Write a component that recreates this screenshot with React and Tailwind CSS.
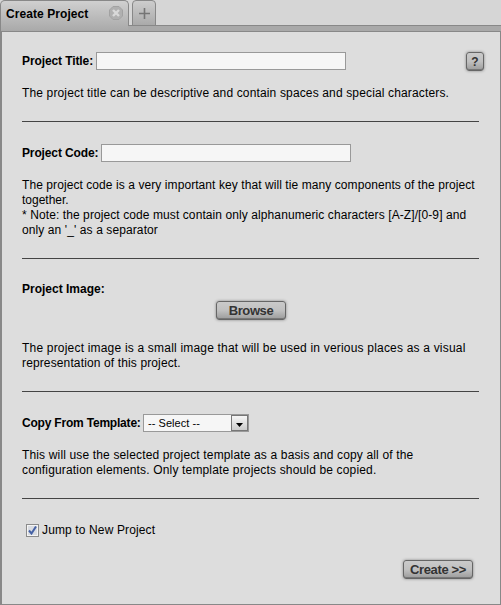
import React from 'react';

function Line({ children, className = '' }) {
  return <div className={`h-[15px] whitespace-nowrap leading-[15px] ${className}`}>{children}</div>;
}

function Label({ children, className = '' }) {
  return <span className={`shrink-0 whitespace-nowrap font-bold leading-[18px] ${className}`}>{children}</span>;
}

function Field() {
  return <input className="block h-[18px] w-[250px] border border-[#999] bg-[#f6f6f6] px-1 outline-none" />;
}

function GlossButton({ children, className = '' }) {
  return (
    <button
      className={`flex items-center justify-center whitespace-nowrap rounded-[3px] border border-[#666] bg-linear-to-b from-[#cacaca] via-[#c0c0c0] to-[#9c9c9c] font-bold text-[#333] shadow-[0_0_3px_rgba(0,0,0,0.4),inset_0_-1px_0_#777] ${className}`}
    >
      {children}
    </button>
  );
}

function Tabs() {
  return (
    <div className="relative flex h-8 border-b border-[#888] bg-[#d6d6d6]">
      <div className="flex h-[31px] w-[129px] rounded-t-[5px] border-x border-t border-[#888] bg-linear-to-b from-[#d0d0d0] to-[#a9a9a9] pl-[5px] pt-[5px]">
        <span className="mt-px w-[103px] whitespace-nowrap text-[12px] font-bold leading-[15px] tracking-[0.07px]">
          Create Project
        </span>
        <svg width="14" height="14" viewBox="0 0 14 14">
          <path d="M4 .5h6L13.500 4v6L10 13.500H4L.5 10V4Z" fill="#b0b0b0" stroke="#a2a2a2" />
          <path d="m4 4 6 6m0-6-6 6" stroke="#d9d9d9" strokeWidth="2.400" />
        </svg>
      </div>
      <div className="ml-[3px] flex h-[26px] w-6 justify-end rounded-t-[4px] border border-[#888] bg-linear-to-b from-[#cdcdcd] to-[#aaa] pr-[5px] pt-[7px]">
        <svg width="11" height="11" viewBox="0 0 11 11">
          <path d="M5.500 0v11M0 5.500h11" stroke="#757575" strokeWidth="1.600" />
        </svg>
      </div>
      <div className="absolute left-[128px] right-0 top-[25px] h-[6px] border-t border-[#888] bg-[#a9a9a9]" />
    </div>
  );
}

export default function App() {
  return (
    <div className="flex h-[605px] w-[501px] flex-col overflow-hidden bg-[#ddd] font-['Liberation_Sans',Arial,sans-serif] text-[12px] text-black">
      <Tabs />
      <main className="flex-1 border-b border-l-2 border-r border-[#888] pl-5">
        <section className="h-[90px] w-[457px] border-b border-[#444] pt-5">
          <div className="flex w-[462px]">
            <Label className="w-[74px] tracking-[-0.1px]">Project Title:</Label>
            <Field />
            <GlossButton className="ml-auto h-[19px] w-[18px] text-[12px]">?</GlossButton>
          </div>
          <Line className="mt-[15px] tracking-[0.145px]">
            The project title can be descriptive and contain spaces and special characters.
          </Line>
        </section>

        <section className="h-[137px] w-[457px] border-b border-[#444] pt-[22px]">
          <div className="flex">
            <Label className="w-[79px] tracking-[-0.13px]">Project Code:</Label>
            <Field />
          </div>
          <div className="mt-4">
            <Line className="tracking-[0.077px]">
              The project code is a very important key that will tie many components of the project
            </Line>
            <Line>together.</Line>
            <Line className="tracking-[0.09px]">
              * Note: the project code must contain only alphanumeric characters [A-Z]/[0-9] and
            </Line>
            <Line className="tracking-[0.1px]">only an '_' as a separator</Line>
          </div>
        </section>

        <section className="h-[133px] w-[457px] border-b border-[#444] pt-[21px]">
          <Label className="block">Project Image:</Label>
          <GlossButton className="ml-[194px] mt-[3px] h-[19px] w-[70px] text-[13px] tracking-[-0.4px]">
            Browse
          </GlossButton>
          <div className="mt-[21px]">
            <Line className="tracking-[0.195px]">
              The project image is a small image that will be used in verious places as a visual
            </Line>
            <Line className="tracking-[0.13px]">representation of this project.</Line>
          </div>
        </section>

        <section className="h-[107px] w-[457px] border-b border-[#444] pt-[22px]">
          <div className="flex">
            <Label className="w-[121px] tracking-[-0.2px]">Copy From Template:</Label>
            <div className="flex h-[18px] w-[106px] border border-[#999] bg-[#f6f6f6]">
              <span className="flex-1 pl-1 text-[11px] leading-[17px] tracking-[0.05px]">-- Select --</span>
              <span className="flex h-4 w-[17px] items-center justify-center border border-[#777] bg-linear-to-b from-[#f6f6f6] to-[#ccc]">
                <svg width="7" height="4" viewBox="0 0 7 4" className="mt-[3px]">
                  <path d="M0 0h7L3.500 4Z" fill="#000" />
                </svg>
              </span>
            </div>
          </div>
          <div className="mt-4">
            <Line className="tracking-[0.15px]">
              This will use the selected project template as a basis and copy all of the
            </Line>
            <Line className="tracking-[0.16px]">configuration elements. Only template projects should be copied.</Line>
          </div>
        </section>

        <section className="pt-[23px]">
          <div className="flex h-4 pl-1">
            <span className="mt-[2px] flex h-[13px] w-[13px] items-center justify-center border border-[#8b8b8b] bg-[#f4f4f4]">
              <svg width="9" height="9" viewBox="0 0 9 9">
                <path d="M0 0h9v9H0Z" fill="#d9dce2" />
                <path d="m1 4.500 2.500 3L8 .5" fill="none" stroke="#4561a5" strokeWidth="2" />
              </svg>
            </span>
            <span className="ml-[3px] whitespace-nowrap leading-4 tracking-[0.13px]">Jump to New Project</span>
          </div>
          <GlossButton className="ml-[381px] mt-[22px] h-[19px] w-[70px] text-[13px] tracking-[-0.35px]">
            Create &gt;&gt;
          </GlossButton>
        </section>
      </main>
    </div>
  );
}
